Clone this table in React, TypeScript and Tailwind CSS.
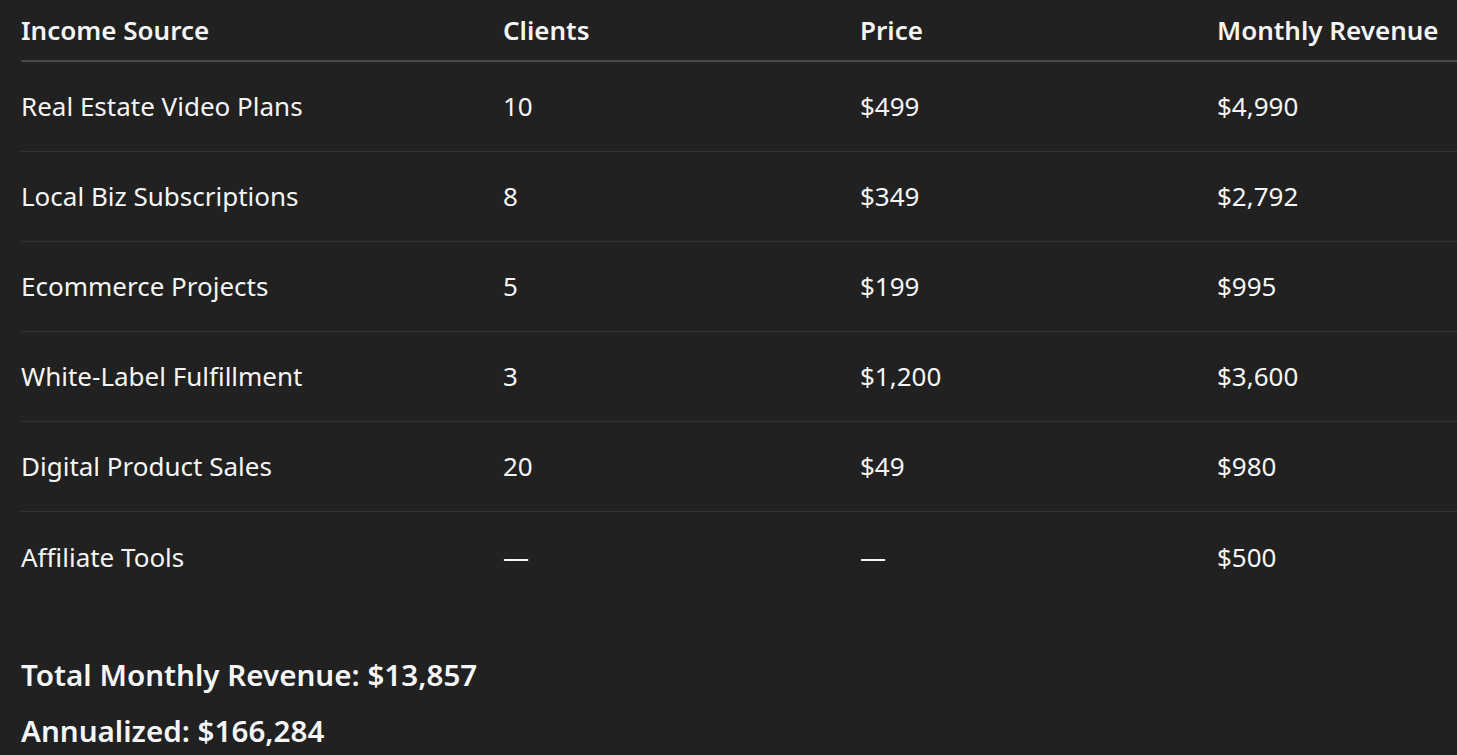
const rows = [
  ["Real Estate Video Plans", "10", "$499", "$4,990"],
  ["Local Biz Subscriptions", "8", "$349", "$2,792"],
  ["Ecommerce Projects", "5", "$199", "$995"],
  ["White-Label Fulfillment", "3", "$1,200", "$3,600"],
  ["Digital Product Sales", "20", "$49", "$980"],
  ["Affiliate Tools", "—", "—", "$500"],
];

export default function App() {
  return (
    <div
      className="h-[755px] w-[1457px] overflow-hidden bg-[#212121] text-[#f5f5f5]"
      style={{ fontFamily: '"Noto Sans", "Open Sans", sans-serif' }}
    >
      <div className="w-[1600px] pl-[21px]">
        <div className="grid grid-cols-[482px_357px_357px_357px] border-b-2 border-[#4a4a4a] h-[62px] items-center text-[26px] font-semibold">
          <div>Income Source</div>
          <div>Clients</div>
          <div>Price</div>
          <div>Monthly Revenue</div>
        </div>
        {rows.map((r, i) => (
          <div
            key={r[0]}
            className={
              "grid grid-cols-[482px_357px_357px_357px] h-[90px] items-center text-[26px] " +
              (i < rows.length - 1 ? "border-b border-[#323232]" : "")
            }
          >
            {r.map((c, j) => (
              <div key={j}>{c}</div>
            ))}
          </div>
        ))}
      </div>
      <div className="pl-[21px] pt-[45px] text-[29.6px] font-semibold leading-[56px]">
        <p>Total Monthly Revenue: $13,857</p>
        <p>Annualized: $166,284</p>
      </div>
    </div>
  );
}
